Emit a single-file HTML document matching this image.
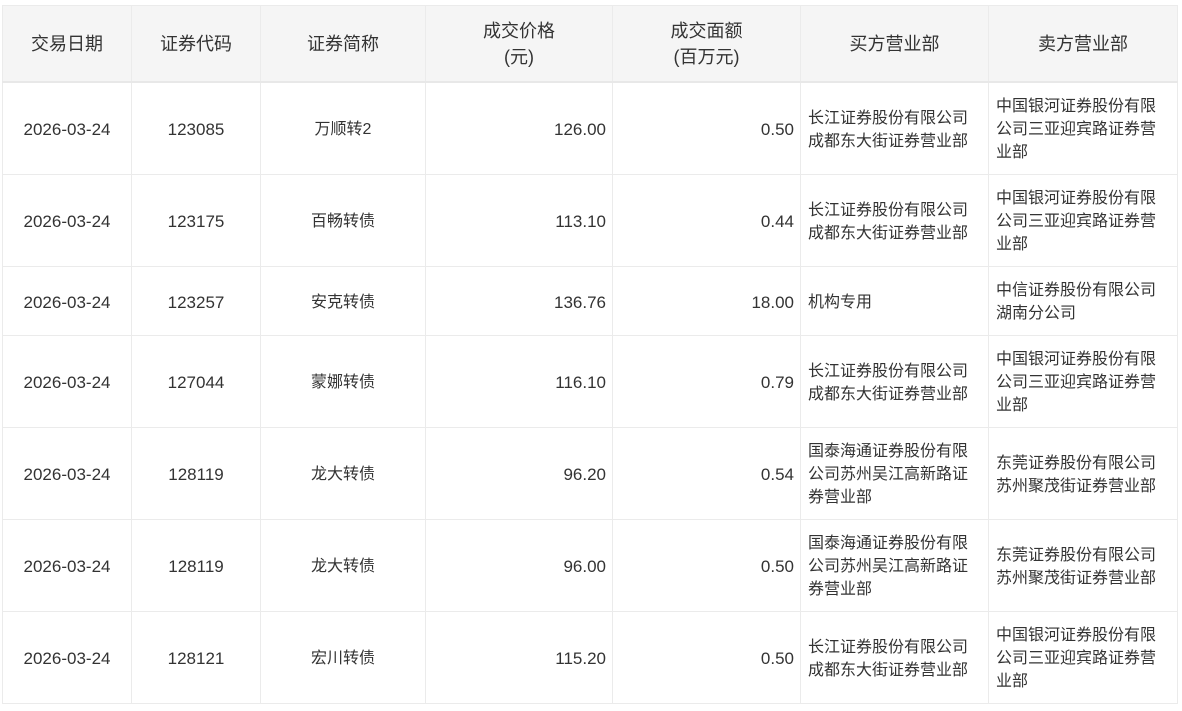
<!DOCTYPE html>
<html><head><meta charset="utf-8"><style>
body{margin:0;background:#fff;font-family:"Liberation Sans","Noto Sans CJK SC",sans-serif;color:#333;}
table{position:absolute;left:2px;top:5px;border-collapse:collapse;table-layout:fixed;width:1175px;}
td,th{border:1px solid #ebebeb;font-size:16px;line-height:23px;padding:0 7px;text-align:center;}
td{padding-top:3px}
th{background:#f5f5f5;font-weight:normal;font-size:18px;height:75px;line-height:26px;border-bottom:2px solid #e8e8e8;}
td.r{text-align:right;padding-right:6px}
td.l{text-align:left}
.n{font-size:17px}
</style></head><body>
<table>
<colgroup><col style="width:129px"><col style="width:129px"><col style="width:165px"><col style="width:187px"><col style="width:188px"><col style="width:188px"><col style="width:189px"></colgroup>
<tr><th>交易日期</th><th>证券代码</th><th>证券简称</th><th>成交价格<br>(元)</th><th>成交面额<br>(百万元)</th><th>买方营业部</th><th>卖方营业部</th></tr>
<tr style="height:92px"><td class="n">2026-03-24</td><td class="n">123085</td><td>万顺转2</td><td class="r n">126.00</td><td class="r n">0.50</td><td class="l">长江证券股份有限公司成都东大街证券营业部</td><td class="l">中国银河证券股份有限公司三亚迎宾路证券营业部</td></tr>
<tr style="height:92px"><td class="n">2026-03-24</td><td class="n">123175</td><td>百畅转债</td><td class="r n">113.10</td><td class="r n">0.44</td><td class="l">长江证券股份有限公司成都东大街证券营业部</td><td class="l">中国银河证券股份有限公司三亚迎宾路证券营业部</td></tr>
<tr style="height:69px"><td class="n">2026-03-24</td><td class="n">123257</td><td>安克转债</td><td class="r n">136.76</td><td class="r n">18.00</td><td class="l">机构专用</td><td class="l">中信证券股份有限公司湖南分公司</td></tr>
<tr style="height:92px"><td class="n">2026-03-24</td><td class="n">127044</td><td>蒙娜转债</td><td class="r n">116.10</td><td class="r n">0.79</td><td class="l">长江证券股份有限公司成都东大街证券营业部</td><td class="l">中国银河证券股份有限公司三亚迎宾路证券营业部</td></tr>
<tr style="height:92px"><td class="n">2026-03-24</td><td class="n">128119</td><td>龙大转债</td><td class="r n">96.20</td><td class="r n">0.54</td><td class="l">国泰海通证券股份有限公司苏州吴江高新路证券营业部</td><td class="l">东莞证券股份有限公司苏州聚茂街证券营业部</td></tr>
<tr style="height:92px"><td class="n">2026-03-24</td><td class="n">128119</td><td>龙大转债</td><td class="r n">96.00</td><td class="r n">0.50</td><td class="l">国泰海通证券股份有限公司苏州吴江高新路证券营业部</td><td class="l">东莞证券股份有限公司苏州聚茂街证券营业部</td></tr>
<tr style="height:92px"><td class="n">2026-03-24</td><td class="n">128121</td><td>宏川转债</td><td class="r n">115.20</td><td class="r n">0.50</td><td class="l">长江证券股份有限公司成都东大街证券营业部</td><td class="l">中国银河证券股份有限公司三亚迎宾路证券营业部</td></tr>
</table>
</body></html>
